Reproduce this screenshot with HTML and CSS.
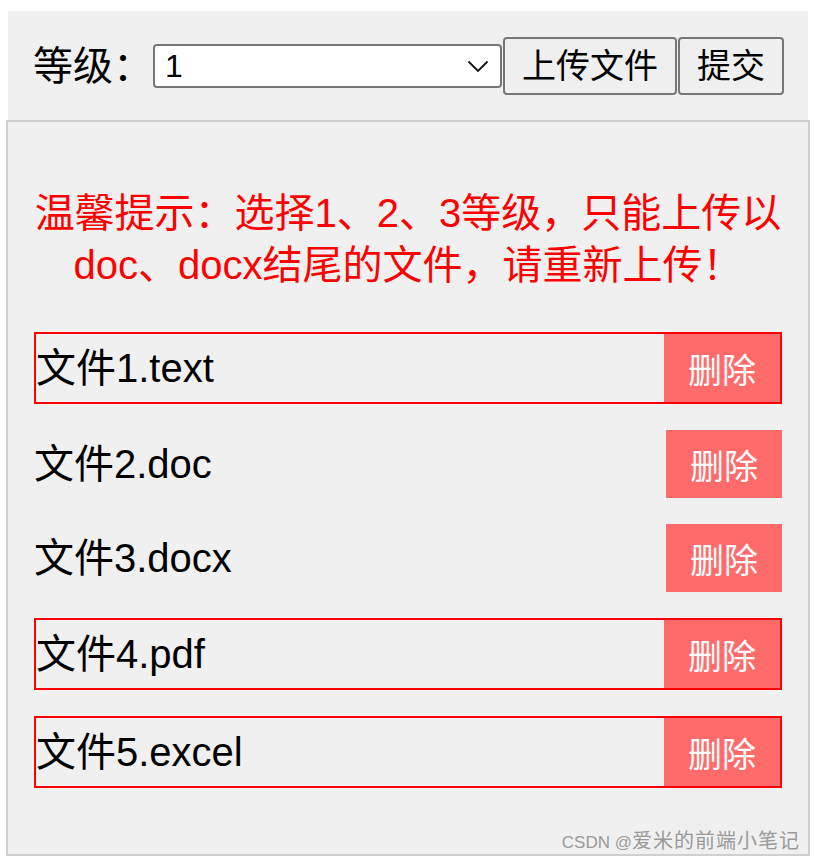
FILE: index.html
```html
<!DOCTYPE html>
<html lang="zh-CN">
<head>
<meta charset="utf-8">
<title>上传文件</title>
<link rel="stylesheet" href="styles.css">
</head>
<body>
<div class="toolbar">
  <span class="label">等级：</span><span class="select-wrap"><select class="level"><option>1</option><option>2</option><option>3</option></select><svg class="chevron" width="22" height="13" viewBox="0 0 22 13"><path d="M1.5 1.5 L11 11 L20.5 1.5" fill="none" stroke="#111" stroke-width="1.8"/></svg></span><button class="btn">上传文件</button><button class="btn">提交</button>
</div>
<div class="box">
  <p class="hint">温馨提示：选择1、2、3等级，只能上传以doc、docx结尾的文件，请重新上传！</p>
  <div class="file-item invalid"><span class="file-name">文件1.text</span><button class="del">删除</button></div>
  <div class="file-item"><span class="file-name">文件2.doc</span><button class="del">删除</button></div>
  <div class="file-item"><span class="file-name">文件3.docx</span><button class="del">删除</button></div>
  <div class="file-item invalid"><span class="file-name">文件4.pdf</span><button class="del">删除</button></div>
  <div class="file-item invalid"><span class="file-name">文件5.excel</span><button class="del">删除</button></div>
  <div class="watermark">CSDN @<span class="wm-cjk">爱米的前端小笔记</span></div>
</div>
</body>
</html>
```
FILE: styles.css
```css
* { box-sizing: border-box; }
html, body { margin: 0; padding: 0; background: #ffffff; }
body { font-family: "Liberation Sans", "Noto Sans CJK SC", sans-serif; color: #000; }

.toolbar {
  margin: 11px 0 0 8px;
  width: 800px;
  height: 109px;
  background: #f0f0f0;
  display: flex;
  align-items: center;
  padding-left: 25px;
}
.label { font-size: 40px; line-height: 1; width: 120px; flex: none; white-space: nowrap; }
.select-wrap { position: relative; display: block; width: 349px; height: 44px; flex: none; }
.level {
  appearance: none;
  -webkit-appearance: none;
  width: 100%;
  height: 100%;
  border: 2px solid #767676;
  border-radius: 4px;
  background: #fff;
  font-family: "Liberation Sans", sans-serif;
  font-size: 32px;
  line-height: 40px;
  padding: 0 0 0 10px;
  color: #000;
  outline: none;
}
.chevron { position: absolute; right: 13px; top: 16px; pointer-events: none; }
.btn {
  flex: none;
  height: 58px;
  padding: 0 17px;
  margin-left: 1px;
  background: #efefef;
  border: 2px solid #767676;
  border-radius: 4px;
  font-family: inherit;
  font-size: 34px;
  line-height: 1;
  color: #000;
}

.box {
  position: relative;
  margin-left: 6px;
  width: 804px;
  border: 2px solid #cfcfcf;
  background: #f0f0f0;
  padding: 26px 26px 40px 26px;
}
.hint {
  margin: 39px 0 41px;
  color: #ff0000;
  font-size: 40px;
  line-height: 52px;
  text-align: center;
}
.file-item {
  display: flex;
  justify-content: space-between;
  align-items: center;
  margin-bottom: 26px;
}
.file-item.invalid { border: 2px solid #ff0000; }
.file-name { font-size: 40px; line-height: 1; white-space: nowrap; }
.del {
  width: 116px;
  height: 68px;
  border: none;
  background: #ff6b6b;
  color: #fff;
  font-family: inherit;
  font-size: 34px;
  padding: 0;
}
.watermark {
  position: absolute;
  right: 8px;
  bottom: 0;
  font-size: 17px;
  line-height: 22px;
  color: #9a9a9a;
  white-space: nowrap;
}
.wm-cjk { font-size: 20px; letter-spacing: 1px; }
```
